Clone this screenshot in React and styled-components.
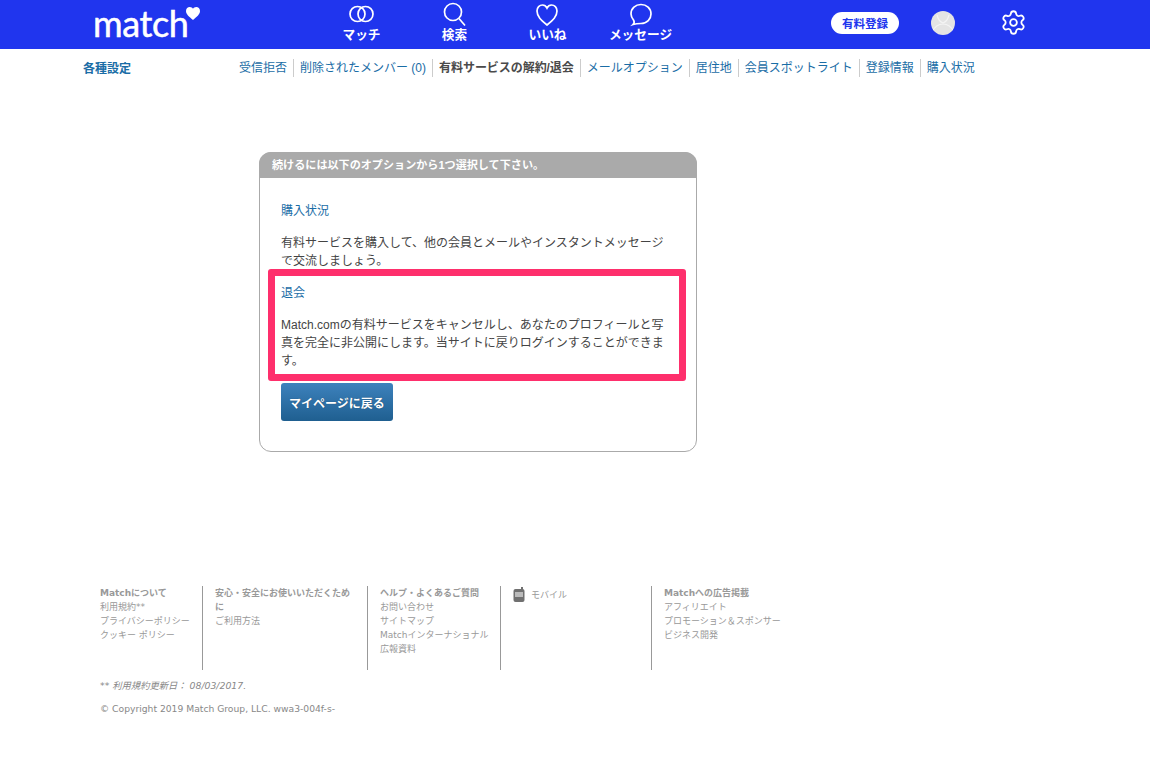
import React from "react";
import styled, { createGlobalStyle } from "styled-components";
import { Settings } from "lucide-react";

const jp = `"Liberation Sans", "Noto Sans CJK JP", sans-serif`;
const Global = createGlobalStyle`
  html, body { margin: 0; padding: 0; background: #fff; }
  body { font-family: ${jp}; }
  a { text-decoration: none; }
`;
const Page = styled.div`width: 1150px; height: 776px; overflow: hidden; background: #fff;`;
const Header = styled.header`
  height: 49px; background: #2035ee; display: flex; align-items: flex-start; padding-left: 93px; box-sizing: border-box; color: #fff;
`;
const Logo = styled.div`
  width: 222px; display: flex; align-items: flex-start; height: 49px;
`;
const LogoWord = styled.span`
  font-family: Lato, sans-serif; font-size: 36px; line-height: 36px; margin-top: 5px; letter-spacing: -0.4px; color: #fff; -webkit-text-stroke: 0.5px #fff;
`;
const LogoHeart = styled.svg`width: 14px; height: 13px; margin: 7px 0 0 -2px;`;
const MainNav = styled.nav`display: flex; width: 372px;`;
const NavItem = styled.a`
  width: 93px; height: 49px; display: flex; flex-direction: column; align-items: center; color: #fff; font-size: 12.7px; font-weight: 700; line-height: 14px; white-space: nowrap;
`;
const NavIcon = styled.svg`width: 26px; height: 26px; margin-top: 1px; flex: none; fill: none; stroke: #fff; stroke-width: 1.7;`;
const NavLabel = styled.span`margin-top: 1px;`;
const HeaderRight = styled.div`display: flex; align-items: center; height: 45px; margin-left: 144px;`;
const Pill = styled.a`
  width: 68px; height: 22px; border-radius: 11px; background: #fff; color: #2035ee; font-size: 11.5px; font-weight: 700; display: flex; align-items: center; justify-content: center;
`;
const Avatar = styled.svg`width: 24px; height: 24px; margin-left: 32px; border-radius: 50%; background: #e4e4e4;`;
const Gear = styled(Settings)`margin-left: 45px; width: 27px; height: 27px; color: #fff;`;

const SubBar = styled.div`display: flex; padding: 10px 0 0 83px; height: 38px; box-sizing: border-box;`;
const SubTitle = styled.h2`
  margin: 2px 0 0; width: 150px; font-size: 12px; line-height: 16px; font-weight: 700; color: #1a6da6; flex: none;
`;
const SubLinks = styled.ul`display: flex; list-style: none; margin: 0; padding: 0; height: 18px;`;
const SubLink = styled.li`
  font-size: 12px; line-height: 18px; padding: 0 6px; color: ${p => p.$current ? "#4a4a4a" : "#1a6da6"}; font-weight: ${p => p.$current ? 700 : 400};
  letter-spacing: ${p => p.$current ? "-0.05px" : "0"};
  border-left: ${p => p.$first ? "none" : "1px solid #ccc"}; white-space: nowrap;
`;

const Card = styled.section`
  position: relative; width: 438px; height: 300px; box-sizing: border-box; margin: 65px 0 0 259px; border: 1px solid #aaa; border-radius: 12px; overflow: visible;
`;
const CardHead = styled.div`
  height: 26px; margin: -1px -1px 0; background: #aaa; border-radius: 12px 12px 0 0; color: #fff; font-size: 11.1px; font-weight: 700; line-height: 26px; padding-left: 13px;
`;
const CardBody = styled.div`padding: 24px 21px 0 21px;`;
const Option = styled.div`position: relative; margin-bottom: 14px;`;
const OptionTitle = styled.a`display: block; font-size: 12px; line-height: 18px; color: #1a6da6; margin-bottom: 14px;`;
const OptionText = styled.p`margin: 0; font-size: 12px; line-height: 18px; color: #444;`;
const Highlight = styled.div`
  position: absolute; left: -13px; right: -11px; top: -15px; bottom: -11px; border: 7px solid #fe2f6c; border-radius: 3px; pointer-events: none;
`;
const BackButton = styled.a`
  display: flex; align-items: center; justify-content: center; width: 112px; height: 38px; margin-top: -1px; border-radius: 3px;
  background: linear-gradient(#3d82bd, #1f5f90); color: #fff; font-size: 12px; font-weight: 700; text-shadow: 0 0 1px rgba(0,0,0,.4);
`;

const FooterWrap = styled.footer`margin: 134px 0 0 100px; font-family: "DejaVu Sans", "Noto Sans CJK JP", sans-serif; font-size: 9px; line-height: 14px; color: #999;`;
const FootCols = styled.div`display: flex; height: 84px;`;
const FootCol = styled.div`
  width: ${p => p.$w}px; box-sizing: border-box; padding-left: ${p => p.$first ? 0 : 12}px; padding-right: 14px; border-left: ${p => p.$first ? "none" : "1px solid #999"}; white-space: normal;
`;
const FootHead = styled.div`font-weight: 700; color: #999;`;
const FootLink = styled.a`display: block; color: #999; white-space: nowrap;`;
const Mobile = styled.div`display: flex; align-items: flex-start; gap: 6px;`;
const MobileLink = styled(FootLink)`margin-top: 2px;`;
const PhoneIcon = styled.svg`width: 12px; height: 15px; flex: none; margin-top: 1px;`;
const Note = styled.p`margin: 9px 0 0; font-size: 9.3px; font-style: italic; color: #888;`;
const Copy = styled.p`margin: 9px 0 0; font-size: 9.2px; color: #888;`;

export default function App() {
  return (
    <Page>
      <Global />
      <Header>
        <Logo>
          <LogoWord>match</LogoWord>
          <LogoHeart viewBox="0 0 24 22"><path fill="#fff" d="M12 22C5 16 0 12 0 6.500 0 2.500 3 0 6.500 0 9 0 11 1.200 12 3c1-1.800 3-3 5.500-3C21 0 24 2.500 24 6.500 24 12 19 16 12 22z" /></LogoHeart>
        </Logo>
        <MainNav>
          <NavItem>
            <NavIcon viewBox="0 0 26 26"><circle cx="8.500" cy="13" r="7.500" /><circle cx="16.500" cy="13" r="7.500" /></NavIcon>
            <NavLabel>マッチ</NavLabel>
          </NavItem>
          <NavItem>
            <NavIcon viewBox="0 0 26 26"><circle cx="11" cy="11" r="8.500" /><path d="M17 17.500l6 7" /></NavIcon>
            <NavLabel>検索</NavLabel>
          </NavItem>
          <NavItem>
            <NavIcon viewBox="0 0 26 26"><path d="M12 24C6 19 2 15.500 2 10 2 6.500 4.500 4 7.500 4c2 0 3.500 1 4.500 3 1-2 2.500-3 4.500-3 3 0 5.500 2.500 5.500 6 0 5.500-4 9-10 14z" /></NavIcon>
            <NavLabel>いいね</NavLabel>
          </NavItem>
          <NavItem>
            <NavIcon viewBox="0 0 26 26"><path d="M13 3.500c5.500 0 10 4 10 9.500 0 5-4 9.500-10 9.500-2 0-4.500 0-8 1 1.500-1.500 1.500-3 .5-4.500C4 17 3 15.500 3 13 3 7.500 7.500 3.500 13 3.500z" /></NavIcon>
            <NavLabel>メッセージ</NavLabel>
          </NavItem>
        </MainNav>
        <HeaderRight>
          <Pill>有料登録</Pill>
          <Avatar viewBox="0 0 24 24"><path fill="none" stroke="#f4f4f4" strokeWidth="1.200" d="M6 4c1 4 3 7 6 8 3-1 5-4 6-8M1 21c3-6 7-8 11-8s8 2 11 8" /></Avatar>
          <Gear strokeWidth={1.600} />
        </HeaderRight>
      </Header>
      <SubBar>
        <SubTitle>各種設定</SubTitle>
        <SubLinks>
          <SubLink $first>受信拒否</SubLink>
          <SubLink>削除されたメンバー (0)</SubLink>
          <SubLink $current>有料サービスの解約/退会</SubLink>
          <SubLink>メールオプション</SubLink>
          <SubLink>居住地</SubLink>
          <SubLink>会員スポットライト</SubLink>
          <SubLink>登録情報</SubLink>
          <SubLink>購入状況</SubLink>
        </SubLinks>
      </SubBar>
      <Card>
        <CardHead>続けるには以下のオプションから1つ選択して下さい。</CardHead>
        <CardBody>
          <Option>
            <OptionTitle>購入状況</OptionTitle>
            <OptionText>有料サービスを購入して、他の会員とメールやインスタントメッセージで交流しましょう。</OptionText>
          </Option>
          <Option>
            <OptionTitle>退会</OptionTitle>
            <OptionText>Match.comの有料サービスをキャンセルし、あなたのプロフィールと写真を完全に非公開にします。当サイトに戻りログインすることができます。</OptionText>
            <Highlight />
          </Option>
          <BackButton>マイページに戻る</BackButton>
        </CardBody>
      </Card>
      <FooterWrap>
        <FootCols>
          <FootCol $first $w={102}>
            <FootHead>Matchについて</FootHead>
            <FootLink>利用規約**</FootLink>
            <FootLink>プライバシーポリシー</FootLink>
            <FootLink>クッキー ポリシー</FootLink>
          </FootCol>
          <FootCol $w={165}>
            <FootHead>安心・安全にお使いいただくために</FootHead>
            <FootLink>ご利用方法</FootLink>
          </FootCol>
          <FootCol $w={133}>
            <FootHead>ヘルプ・よくあるご質問</FootHead>
            <FootLink>お問い合わせ</FootLink>
            <FootLink>サイトマップ</FootLink>
            <FootLink>Matchインターナショナル</FootLink>
            <FootLink>広報資料</FootLink>
          </FootCol>
          <FootCol $w={151}>
            <Mobile>
              <PhoneIcon viewBox="0 0 12 15"><rect x="0.500" y="2" width="11" height="13" rx="2" fill="#707070" /><rect x="8" y="0" width="2" height="3" fill="#707070" /><rect x="2" y="5" width="8" height="5" fill="#bbb" /></PhoneIcon>
              <MobileLink>モバイル</MobileLink>
            </Mobile>
          </FootCol>
          <FootCol $w={150}>
            <FootHead>Matchへの広告掲載</FootHead>
            <FootLink>アフィリエイト</FootLink>
            <FootLink>プロモーション＆スポンサー</FootLink>
            <FootLink>ビジネス開発</FootLink>
          </FootCol>
        </FootCols>
        <Note>** 利用規約更新日： 08/03/2017.</Note>
        <Copy>© Copyright 2019 Match Group, LLC. wwa3-004f-s-</Copy>
      </FooterWrap>
    </Page>
  );
}
